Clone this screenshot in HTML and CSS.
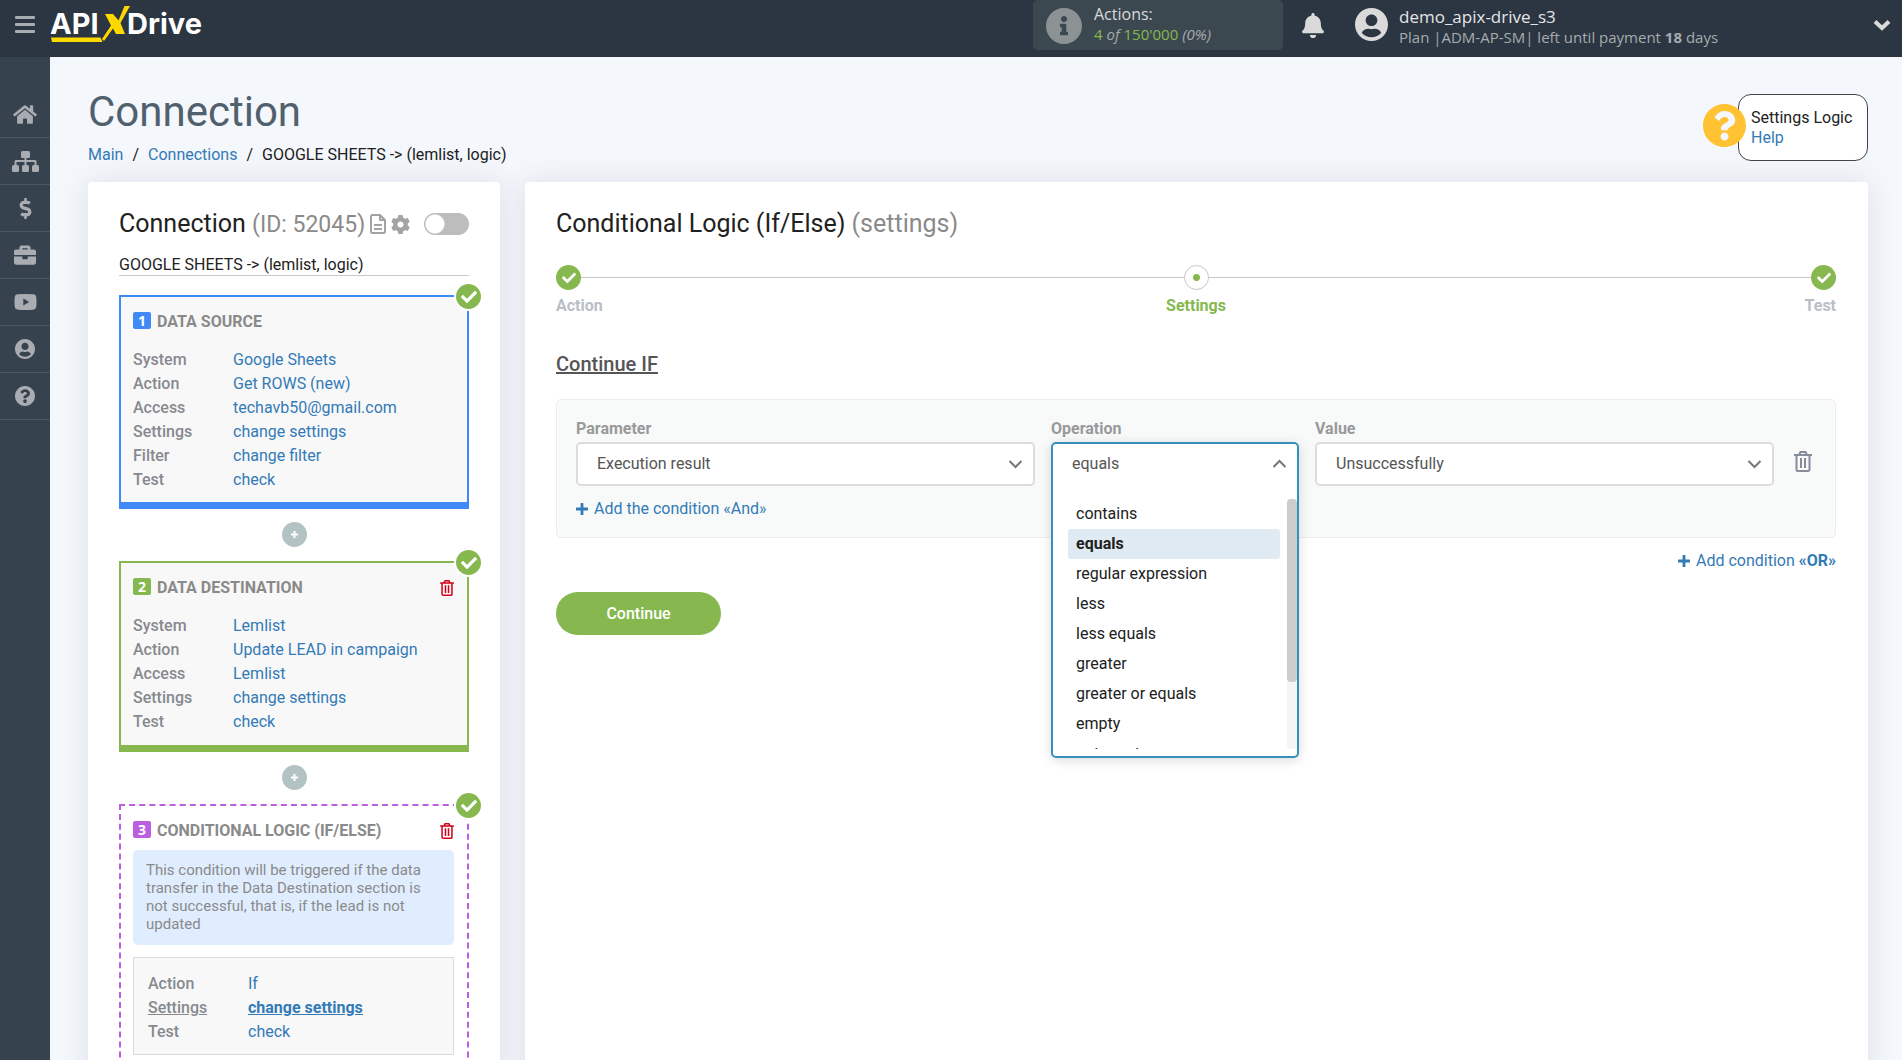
FILE: index.html
```html
<!DOCTYPE html>
<html lang="en">
<head>
<meta charset="utf-8">
<title>Connection - ApiX-Drive</title>
<meta name="viewport" content="width=device-width, initial-scale=1">
<link rel="stylesheet" href="styles.css">
</head>
<body>
<svg class="sprite" aria-hidden="true">
  <symbol id="i-check" viewBox="0 0 512 512"><path d="M173.898 439.404l-166.4-166.4c-9.997-9.997-9.997-26.206 0-36.204l36.203-36.204c9.997-9.998 26.207-9.998 36.204 0L192 312.69 432.095 72.596c9.997-9.997 26.207-9.997 36.204 0l36.203 36.204c9.997 9.997 9.997 26.206 0 36.204l-294.4 294.401c-9.998 9.997-26.207 9.997-36.204-.001z"/></symbol>
  <symbol id="i-question" viewBox="8 8 496 496"><path d="M504 256c0 136.997-111.043 248-248 248S8 392.997 8 256C8 119.083 119.043 8 256 8s248 111.083 248 248zM262.655 90c-54.497 0-89.255 22.957-116.549 63.758-3.536 5.286-2.353 12.415 2.715 16.258l34.699 26.31c5.205 3.947 12.621 3.008 16.665-2.122 17.864-22.658 30.113-35.797 57.303-35.797 20.429 0 45.698 13.148 45.698 32.958 0 14.976-12.363 22.667-32.534 33.976C247.128 238.528 216 254.941 216 296v4c0 6.627 5.373 12 12 12h56c6.627 0 12-5.373 12-12v-1.333c0-28.462 83.186-29.647 83.186-106.667 0-58.002-60.165-102-116.531-102zM256 338c-25.365 0-46 20.635-46 46 0 25.364 20.635 46 46 46s46-20.636 46-46c0-25.365-20.635-46-46-46z"/></symbol>
  <symbol id="i-info" viewBox="8 8 496 496"><path d="M256 8C119.043 8 8 119.083 8 256c0 136.997 111.043 248 248 248s248-111.003 248-248C504 119.083 392.957 8 256 8zm0 110c23.196 0 42 18.804 42 42s-18.804 42-42 42-42-18.804-42-42 18.804-42 42-42zm56 254c0 6.627-5.373 12-12 12h-88c-6.627 0-12-5.373-12-12v-24c0-6.627 5.373-12 12-12h12v-64h-12c-6.627 0-12-5.373-12-12v-24c0-6.627 5.373-12 12-12h64c6.627 0 12 5.373 12 12v100h12c6.627 0 12 5.373 12 12v24z"/></symbol>
  <symbol id="i-user" viewBox="0 8 496 496"><path d="M248 8C111 8 0 119 0 256s111 248 248 248 248-111 248-248S385 8 248 8zm0 96c48.6 0 88 39.4 88 88s-39.4 88-88 88-88-39.4-88-88 39.4-88 88-88zm0 344c-58.7 0-111.3-26.6-146.5-68.2 18.8-35.4 55.6-59.8 98.5-59.8 2.4 0 4.8.4 7.1 1.1 13 4.2 26.6 6.9 40.9 6.9 14.3 0 28-2.7 40.9-6.9 2.3-.7 4.7-1.1 7.1-1.1 42.9 0 79.7 24.4 98.5 59.8C359.3 421.4 306.7 448 248 448z"/></symbol>
  <symbol id="i-bell" viewBox="0 0 448 512"><path d="M224 512c35.32 0 63.97-28.65 63.97-64H160.03c0 35.35 28.65 64 63.97 64zm215.39-149.71c-19.32-20.76-55.47-51.99-55.47-154.29 0-77.7-54.48-139.9-127.94-155.16V32c0-17.67-14.32-32-31.98-32s-31.98 14.33-31.98 32v20.84C118.56 68.1 64.08 130.3 64.08 208c0 102.3-36.15 133.53-55.47 154.29-6 6.45-8.66 14.16-8.61 21.71.11 16.4 12.98 32 32.1 32h383.8c19.12 0 32-15.6 32.1-32 .05-7.55-2.61-15.27-8.61-21.71z"/></symbol>
  <symbol id="i-home" viewBox="0 0 576 512"><path d="M280.37 148.26L96 300.11V464a16 16 0 0 0 16 16l112.06-.29a16 16 0 0 0 15.92-16V368a16 16 0 0 1 16-16h64a16 16 0 0 1 16 16v95.64a16 16 0 0 0 16 16.05L464 480a16 16 0 0 0 16-16V300L295.67 148.26a12.19 12.19 0 0 0-15.3 0zM571.6 251.47L488 182.56V44.05a12 12 0 0 0-12-12h-56a12 12 0 0 0-12 12v72.61L318.47 43a48 48 0 0 0-61 0L4.34 251.47a12 12 0 0 0-1.6 16.9l25.5 31A12 12 0 0 0 45.15 301l235.22-193.74a12.19 12.19 0 0 1 15.3 0L530.9 301a12 12 0 0 0 16.9-1.6l25.5-31a12 12 0 0 0-1.7-16.93z"/></symbol>
  <symbol id="i-sitemap" viewBox="0 0 27 21"><rect x="9" y="0" width="9" height="7" rx="1.5"/><path d="M12.5 6h2v3H23a1.500 1.500 0 0 1 1.500 1.500V14h-2v-3h-8v3h-2v-3h-8v3h-2v-3.500A1.500 1.500 0 0 1 4 9h8.500z"/><rect x="0" y="14" width="7" height="7" rx="1.500"/><rect x="10" y="14" width="7" height="7" rx="1.500"/><rect x="20" y="14" width="7" height="7" rx="1.500"/></symbol>
  <symbol id="i-dollar" viewBox="0 0 288 512"><path d="M209.2 233.4l-108-31.6C88.700 198.2 80 186.5 80 173.5c0-16.3 13.2-29.5 29.5-29.5h66.3c12.200 0 24.200 3.700 34.200 10.500 6.100 4.100 14.300 3.100 19.500-2l34.800-34c7.100-6.900 6.100-18.400-1.800-24.500C238 74.8 207.400 64.100 176 64V16c0-8.800-7.200-16-16-16h-32c-8.800 0-16 7.200-16 16v48h-2.500C45.800 64-5.400 118.700.5 183.600c4.200 46.100 39.400 83.600 83.800 96.600l102.500 30c12.500 3.700 21.200 15.300 21.200 28.300 0 16.300-13.200 29.500-29.500 29.500h-66.300C100 368 88 364.300 78 357.500c-6.100-4.100-14.300-3.100-19.500 2l-34.800 34c-7.100 6.900-6.100 18.400 1.800 24.500 24.500 19.200 55.100 29.900 86.500 30v48c0 8.800 7.200 16 16 16h32c8.800 0 16-7.200 16-16v-48.200c46.600-.9 90.300-28.600 105.700-72.700 21.500-61.600-14.600-124.800-72.500-141.700z"/></symbol>
  <symbol id="i-case" viewBox="0 0 512 512"><path d="M320 336c0 8.840-7.160 16-16 16h-96c-8.840 0-16-7.160-16-16v-48H0v144c0 25.600 22.400 48 48 48h416c25.600 0 48-22.400 48-48V288H320v48zm144-208h-80V80c0-25.600-22.400-48-48-48H176c-25.600 0-48 22.400-48 48v48H48c-25.600 0-48 22.400-48 48v80h512v-80c0-25.600-22.400-48-48-48zm-144 0H192V96h128v32z"/></symbol>
  <symbol id="i-video" viewBox="0 0 22 16"><path fill-rule="evenodd" d="M3.500.3Q11-.3 18.500.3 21.500.4 21.800 3.400q.4 4.600 0 9.200-.3 3-3.300 3.100-7.500.6-15 0Q.5 15.600.2 12.600-.2 8 .2 3.400.5.400 3.500.3zM8.800 4.600v6.800L14.700 8z"/></symbol>
  <symbol id="i-cog" viewBox="12 8 488 496"><path d="M487.400 315.700l-42.600-24.600c4.300-23.200 4.300-47 0-70.200l42.600-24.600c4.900-2.800 7.100-8.600 5.500-14-11.100-35.600-30-67.800-54.700-94.600-3.800-4.100-10-5.100-14.800-2.300L380.800 110c-17.900-15.400-38.500-27.300-60.800-35.100V25.800c0-5.600-3.900-10.500-9.400-11.700-36.700-8.200-74.300-7.800-109.200 0-5.500 1.200-9.400 6.100-9.400 11.700V75c-22.200 7.900-42.800 19.800-60.800 35.100L88.700 85.500c-4.900-2.800-11-1.900-14.800 2.300-24.700 26.700-43.600 58.900-54.700 94.600-1.700 5.400.6 11.200 5.500 14L67.300 221c-4.300 23.200-4.300 47 0 70.200l-42.600 24.600c-4.900 2.800-7.100 8.600-5.500 14 11.100 35.600 30 67.800 54.700 94.600 3.800 4.100 10 5.100 14.800 2.300l42.600-24.600c17.900 15.400 38.500 27.300 60.800 35.100v49.200c0 5.600 3.900 10.500 9.400 11.700 36.700 8.200 74.300 7.800 109.200 0 5.500-1.200 9.400-6.100 9.400-11.700v-49.200c22.200-7.900 42.800-19.800 60.800-35.100l42.600 24.600c4.900 2.800 11 1.900 14.800-2.300 24.700-26.700 43.600-58.900 54.700-94.600 1.500-5.500-.7-11.300-5.600-14.100zM256 336c-44.100 0-80-35.900-80-80s35.900-80 80-80 80 35.900 80 80-35.900 80-80 80z"/></symbol>
  <symbol id="i-file" viewBox="0 0 16 20"><path fill="none" stroke="currentColor" stroke-width="2" stroke-linejoin="round" d="M2.500 1H10l5 5v11.500a1.500 1.500 0 0 1-1.500 1.500h-11A1.500 1.500 0 0 1 1 17.500v-15A1.500 1.500 0 0 1 2.500 1zM10 1v5h5"/><path fill="none" stroke="currentColor" stroke-width="2" d="M4 11h8M4 15h8"/></symbol>
  <symbol id="i-trash" viewBox="0 0 18 21"><path fill="none" stroke="currentColor" stroke-width="2" d="M0 4h18M5 4l1.500-3h5L13 4M2.500 4v14.500A1.500 1.500 0 0 0 4 20h10a1.500 1.500 0 0 0 1.500-1.500V4"/><path fill="none" stroke="currentColor" stroke-width="2" d="M7 7v10M11 7v10"/></symbol>
  <symbol id="i-plus" viewBox="0 0 12 12"><path d="M4.600.5a.5.500 0 0 1 .5-.5h1.800a.5.500 0 0 1 .5.500v4.100h4.100a.5.500 0 0 1 .5.500v1.800a.5.500 0 0 1-.5.500H7.400v4.100a.5.500 0 0 1-.5.500H5.100a.5.500 0 0 1-.5-.5V7.400H.5a.5.500 0 0 1-.5-.5V5.100a.5.500 0 0 1 .5-.5h4.100z"/></symbol>
  <symbol id="i-down" viewBox="0 0 14 9"><path fill="none" stroke="currentColor" stroke-width="2" d="M1 1l6 6 6-6"/></symbol>
  <symbol id="i-up" viewBox="0 0 14 9"><path fill="none" stroke="currentColor" stroke-width="2" d="M1 8l6-6 6 6"/></symbol>
</svg>

<header class="topbar">
  <button class="menu-btn" type="button" aria-label="Menu"><span></span><span></span><span></span></button>
  <a class="logo" href="#" aria-label="ApiX-Drive">
    <svg width="156" height="40" viewBox="0 0 156 40">
      <text class="logo-text" x="0" y="31">API</text>
      <text class="logo-text" x="77" y="31">Drive</text>
      <path class="logo-mark" d="M55 11h8l5.500 6.500L74.500 3H80L70.500 20 75 31h-9l-3-5.500L54 38l-2-2 9-13.500zM1 34.500h49.500l2 4.500H2z"/>
    </svg>
  </a>
  <div class="quota">
    <svg class="quota-icon"><use href="#i-info"/></svg>
    <div class="quota-text">Actions:<br><small><span class="green">4</span> <i>of</i> <span class="green">150'000</span> <i>(0%)</i></small></div>
  </div>
  <button class="plain bell" type="button" aria-label="Notifications"><svg><use href="#i-bell"/></svg></button>
  <svg class="avatar"><use href="#i-user"/></svg>
  <div class="account">
    <div class="account-name">demo_apix-drive_s3</div>
    <div class="account-plan">Plan |ADM-AP-SM| left until payment <b>18</b> days</div>
  </div>
  <button class="plain account-toggle" type="button" aria-label="Account menu"><svg viewBox="0 0 18 12"><path d="M2 2.500l7 6.500 7-6.500"/></svg></button>
</header>

<div class="app">
  <nav class="sidebar" aria-label="Sections">
    <a href="#" aria-label="Home"><svg width="24" height="21"><use href="#i-home"/></svg></a>
    <a href="#" aria-label="Connections"><svg width="27" height="21"><use href="#i-sitemap"/></svg></a>
    <a href="#" aria-label="Billing"><svg width="13" height="21"><use href="#i-dollar"/></svg></a>
    <a href="#" aria-label="Services"><svg width="22" height="22"><use href="#i-case"/></svg></a>
    <a href="#" aria-label="Video"><svg width="23" height="16"><use href="#i-video"/></svg></a>
    <a href="#" aria-label="Profile"><svg width="20" height="20"><use href="#i-user"/></svg></a>
    <a href="#" aria-label="Help"><svg width="20" height="20"><use href="#i-question"/></svg></a>
  </nav>

  <main class="content">
    <div class="page-head">
      <div>
        <h1>Connection</h1>
        <div class="crumbs"><a href="#">Main</a><span>/</span><a href="#">Connections</a><span>/</span>GOOGLE SHEETS -&gt; (lemlist, logic)</div>
      </div>
      <aside class="help">
        <svg class="help-icon"><use href="#i-question"/></svg>
        <div>Settings Logic</div>
        <a href="#">Help</a>
      </aside>
    </div>

    <div class="columns">
      <section class="card">
        <div class="conn-head">
          <h2>Connection <span>(ID: 52045)</span></h2>
          <svg width="16" height="20"><use href="#i-file"/></svg>
          <svg width="19" height="19"><use href="#i-cog"/></svg>
          <input class="switch" type="checkbox" aria-label="Connection enabled">
        </div>
        <input class="conn-name" type="text" value="GOOGLE SHEETS -&gt; (lemlist, logic)" aria-label="Connection name">

        <div class="block block-blue">
          <span class="done"><svg><use href="#i-check"/></svg></span>
          <h3><span class="num">1</span>DATA SOURCE</h3>
          <dl>
            <dt>System</dt><dd><a href="#">Google Sheets</a></dd>
            <dt>Action</dt><dd><a href="#">Get ROWS (new)</a></dd>
            <dt>Access</dt><dd><a href="#">techavb50@gmail.com</a></dd>
            <dt>Settings</dt><dd><a href="#">change settings</a></dd>
            <dt>Filter</dt><dd><a href="#">change filter</a></dd>
            <dt>Test</dt><dd><a href="#">check</a></dd>
          </dl>
        </div>
        <button class="add" type="button" aria-label="Add block"><svg viewBox="0 0 25 25"><path d="M12.500 9v7M9 12.500h7"/></svg></button>

        <div class="block block-green">
          <span class="done"><svg><use href="#i-check"/></svg></span>
          <h3><span class="num">2</span>DATA DESTINATION<button class="plain remove" type="button" aria-label="Delete"><svg><use href="#i-trash"/></svg></button></h3>
          <dl>
            <dt>System</dt><dd><a href="#">Lemlist</a></dd>
            <dt>Action</dt><dd><a href="#">Update LEAD in campaign</a></dd>
            <dt>Access</dt><dd><a href="#">Lemlist</a></dd>
            <dt>Settings</dt><dd><a href="#">change settings</a></dd>
            <dt>Test</dt><dd><a href="#">check</a></dd>
          </dl>
        </div>
        <button class="add" type="button" aria-label="Add block"><svg viewBox="0 0 25 25"><path d="M12.500 9v7M9 12.500h7"/></svg></button>

        <div class="block block-logic">
          <span class="done"><svg><use href="#i-check"/></svg></span>
          <h3><span class="num">3</span>CONDITIONAL LOGIC (IF/ELSE)<button class="plain remove" type="button" aria-label="Delete"><svg><use href="#i-trash"/></svg></button></h3>
          <p class="note">This condition will be triggered if the data transfer in the Data Destination section is not successful, that is, if the lead is not updated</p>
          <dl class="inner">
            <dt>Action</dt><dd><a href="#">If</a></dd>
            <dt class="current">Settings</dt><dd class="current"><a href="#">change settings</a></dd>
            <dt>Test</dt><dd><a href="#">check</a></dd>
          </dl>
        </div>
      </section>

      <section class="card card-settings">
        <h2>Conditional Logic (If/Else) <span>(settings)</span></h2>
        <ol class="steps">
          <li><span class="dot"><svg><use href="#i-check"/></svg></span>Action</li>
          <li class="active"><span class="dot"></span>Settings</li>
          <li><span class="dot"><svg><use href="#i-check"/></svg></span>Test</li>
        </ol>
        <h3 class="if-title">Continue IF</h3>

        <div class="condition">
          <div class="fields">
            <div class="field">
              <label for="param">Parameter</label>
              <div class="select">
                <select id="param"><option>Execution result</option></select>
                <svg><use href="#i-down"/></svg>
              </div>
            </div>
            <div class="field">
              <label for="op">Operation</label>
              <div class="dropdown">
                <div class="panel">
                  <div class="select open">
                    <select id="op"><option>equals</option></select>
                    <svg><use href="#i-up"/></svg>
                  </div>
                  <div class="list-wrap">
                    <ul class="list" role="listbox" aria-label="Operation">
                      <li role="option">contains</li>
                      <li role="option" aria-selected="true">equals</li>
                      <li role="option">regular expression</li>
                      <li role="option">less</li>
                      <li role="option">less equals</li>
                      <li role="option">greater</li>
                      <li role="option">greater or equals</li>
                      <li role="option">empty</li>
                      <li role="option">not empty</li>
                    </ul>
                    <div class="track"><div class="thumb"></div></div>
                  </div>
                </div>
              </div>
            </div>
            <div class="field">
              <label for="val">Value</label>
              <div class="select">
                <select id="val"><option>Unsuccessfully</option></select>
                <svg><use href="#i-down"/></svg>
              </div>
            </div>
            <button class="plain row-remove" type="button" aria-label="Delete condition"><svg><use href="#i-trash"/></svg></button>
          </div>
          <a class="add-link" href="#"><svg><use href="#i-plus"/></svg>Add the condition «And»</a>
        </div>
        <div class="or-row"><a class="add-link" href="#"><svg><use href="#i-plus"/></svg><span>Add condition <b>«OR»</b></span></a></div>
        <button class="continue" type="button">Continue</button>
      </section>
    </div>
  </main>
</div>
</body>
</html>
```
FILE: styles.css
```css
* { box-sizing: border-box; }

body {
  margin: 0;
  height: 100vh;
  display: flex;
  flex-direction: column;
  overflow: hidden;
  background: #f4f7fc;
  color: #212121;
  font: 16px/20px Roboto, "Liberation Sans", sans-serif;
}

h1, h2, h3, p, ol, ul, dl, dd { margin: 0; padding: 0; }
ol, ul { list-style: none; }
a { color: #337ab7; text-decoration: none; }
b { font-weight: 700; }
svg { display: block; flex: none; fill: currentColor; }
button, input, select { font: inherit; }
button { cursor: pointer; }
.plain { padding: 0; border: 0; background: none; }
.sprite { position: absolute; width: 0; height: 0; }

/* Top bar */
.topbar {
  flex: none;
  display: flex;
  align-items: flex-start;
  height: 57px;
  padding: 0 11px 0 15px;
  background: #2b3642;
  font-family: "Open Sans", "Noto Sans", sans-serif;
}
.menu-btn {
  display: flex;
  flex-direction: column;
  gap: 4px;
  width: 20px;
  margin: 16px 15px 0 0;
  padding: 0;
  border: 0;
  background: none;
}
.menu-btn span { height: 3px; border-radius: 1px; background: #a8adb2; }
.logo { margin: 3px auto 0 0; }
.logo-text { fill: #fff; font: 700 29px Inter, sans-serif; }
.logo-mark { fill: #ffd800; }
.quota {
  display: flex;
  gap: 12px;
  width: 250px;
  height: 50px;
  padding: 8px 13px;
  border-radius: 5px;
  background: #3c4850;
}
.quota-icon { width: 36px; height: 36px; color: #8c9194; }
.quota-text { margin-top: -4px; color: #d9dadb; }
.quota small { font-size: 15px; color: #a6abae; }
.green { color: #86b84f; }
.bell { margin: 13px 31px 0 19px; color: #dadada; }
.bell svg { width: 22px; height: 25px; }
.avatar { width: 33px; height: 33px; margin: 8px 11px 0 0; color: #dadada; }
.account { width: 474px; margin-top: 7px; }
.account-name { color: #e4e5e6; font-size: 17px; }
.account-plan { color: #a6abae; font-size: 15px; }
.account-toggle { margin-top: 19px; }
.account-toggle svg { width: 18px; height: 12px; fill: none; stroke: #dadada; stroke-width: 4px; }

/* Side navigation */
.app { flex: 1; display: flex; min-height: 0; }
.sidebar { flex: none; width: 50px; padding-top: 34px; background: #37424f; color: #a9adb1; }
.sidebar a {
  display: flex;
  align-items: center;
  justify-content: center;
  height: 47px;
  border-bottom: 1px solid #4d5762;
  color: inherit;
}

/* Page */
.content { flex: 1; min-width: 0; padding: 28px 34px 0 38px; overflow: hidden; }
.page-head { display: flex; justify-content: space-between; align-items: flex-start; }
h1 { color: #50606d; font-size: 42px; line-height: 54px; font-weight: 400; }
.crumbs { display: flex; gap: 9px; margin: 4px 0 15px; line-height: 24px; }
.help {
  position: relative;
  width: 130px;
  height: 67px;
  margin-top: 9px;
  padding: 13px 12px;
  border: 1px solid #444;
  border-radius: 13px;
  background: #fff;
}
.help-icon { position: absolute; left: -36px; top: 9px; width: 43px; height: 43px; color: #ffc233; }

.columns { display: grid; grid-template-columns: 412px 1fr; gap: 25px; min-height: 100%; }
.card {
  padding: 27px 31px 40px;
  border-radius: 4px;
  background: #fff;
  box-shadow: 0 0 30px rgba(60, 70, 90, .12);
}
.card-settings { padding-right: 32px; }
h2 { font-size: 25px; line-height: 30px; font-weight: 400; }
h2 span { color: #8a8a8a; }

/* Connection column */
.conn-head { display: flex; align-items: center; gap: 5px; height: 30px; color: #a3a3a3; }
.conn-head h2 { color: #212121; white-space: nowrap; }
.conn-head h2 span { font-size: 23px; }
.switch {
  appearance: none;
  width: 45px;
  height: 22px;
  margin: 0 0 0 auto;
  border-radius: 11px;
  background: radial-gradient(circle at 11px 11px, #fff 9px, #bdbdbd 10px);
}
.conn-name {
  display: block;
  width: 100%;
  height: 24px;
  margin: 13px 0 19px;
  padding: 2px 0 0;
  border: 0;
  border-bottom: 1px solid #c8c8c8;
  background: none;
  color: #212121;
}
.block {
  position: relative;
  padding: 15px 13px 10px 12px;
  border: 2px solid;
  border-bottom-width: 7px;
  background: #f8f8f8;
}
.block-blue { border-color: #3f8af7; --accent: #3f8af7; }
.block-green { border-color: #86b84f; --accent: #86b84f; padding-bottom: 11px; }
.block-logic { border: 2px dashed #bb5edf; padding-bottom: 40px; background: #fff; --accent: #bb5edf; }
.block h3 {
  display: flex;
  align-items: flex-start;
  gap: 6px;
  color: #8a8a8a;
  font-size: 16px;
  font-weight: 700;
}
.num {
  width: 18px;
  border-radius: 2px;
  background: var(--accent);
  color: #fff;
  font: 700 14px/17px "Open Sans", sans-serif;
  text-align: center;
}
.remove { margin: 2px 0 0 auto; color: #d0021b; }
.remove svg { width: 14px; height: 16px; }
.done {
  position: absolute;
  top: -15px;
  right: -16px;
  display: grid;
  place-items: center;
  width: 29px;
  height: 29px;
  border: 2px solid #fff;
  border-radius: 50%;
  background: #86b84f;
  color: #fff;
}
.done svg { width: 16px; height: 16px; }
dl {
  display: grid;
  grid-template-columns: 100px 1fr;
  margin-top: 16px;
  line-height: 24px;
}
dt { color: #87898f; font-weight: 500; }
.current { font-weight: 700; text-decoration: underline; }
dt.current { font-weight: 500; }
.current a { text-decoration: underline; }
.add {
  display: block;
  width: 25px;
  height: 25px;
  margin: 13px auto 14px;
  padding: 0;
  border: 0;
  border-radius: 50%;
  background: #b3c3c3;
}
.add path { stroke: #fff; stroke-width: 2px; }
.note {
  margin-top: 9px;
  padding: 11px 13px 12px;
  border-radius: 5px;
  background: #e0edff;
  color: #8a8a8a;
  font-size: 15px;
  line-height: 18px;
}
.inner { margin-top: 12px; padding: 14px 14px 10px; border: 1px solid #dcdcdc; background: #f8f8f8; }

/* Settings column */
.steps { position: relative; display: flex; margin-top: 26px; color: #b9bec7; font-weight: 700; }
.steps::before { content: ""; position: absolute; left: 0; right: 0; top: 12px; height: 1px; background: #c8c8c8; }
.steps li { position: relative; flex: 1; display: flex; flex-direction: column; gap: 6px; align-items: flex-start; }
.steps li:nth-child(2) { align-items: center; }
.steps li:last-child { align-items: flex-end; }
.steps .active { color: #86b84f; }
.dot {
  display: grid;
  place-items: center;
  width: 25px;
  height: 25px;
  border-radius: 50%;
  background: #86b84f;
  color: #fff;
}
.dot svg { width: 14px; height: 14px; }
.active .dot { border: 1px solid #c8c8c8; background: radial-gradient(circle, #86b84f 3px, #fff 4px); }
.if-title {
  margin: 36px 0 23px;
  color: #555;
  font-size: 20px;
  line-height: 24px;
  font-weight: 500;
  text-decoration: underline;
}
.condition { padding: 19px 19px 18px; border: 1px solid #ebedec; border-radius: 5px; background: #f8faf9; }
.fields { display: grid; grid-template-columns: 1fr 248px 1fr 26px; gap: 16px; margin-bottom: 13px; }
.field label { display: block; margin-bottom: 3px; color: #999; font-weight: 700; }
.select { position: relative; }
.select select {
  appearance: none;
  display: block;
  width: 100%;
  height: 44px;
  padding: 0 40px 0 19px;
  border: 2px solid #dcdcdc;
  border-radius: 5px;
  background: #fff;
  color: #555;
}
.select svg { position: absolute; right: 12px; top: 18px; width: 15px; height: 9px; color: #777; pointer-events: none; }
.select.open select { height: 40px; border: 0; }
.select.open svg { right: 10px; top: 15px; }
.dropdown { position: relative; height: 44px; }
.panel {
  position: absolute;
  z-index: 2;
  inset: 0 0 auto;
  padding-bottom: 7px;
  border: 2px solid #3690b9;
  border-radius: 5px;
  background: #fff;
  box-shadow: 0 2px 12px rgba(0, 0, 0, .15);
}
.list-wrap { display: flex; gap: 7px; height: 250px; margin-top: 15px; padding-left: 15px; overflow: hidden; }
.list { flex: 1; }
.list li { height: 30px; padding: 0 8px; border-radius: 3px; line-height: 30px; }
.list [aria-selected="true"] { background: #e0eaf3; font-weight: 700; }
.track { width: 10px; border-radius: 4px; background: #f5f5f5; }
.thumb { height: 73%; border-radius: 4px; background: #ccc; }
.row-remove { align-self: start; margin: 32px auto 0; color: #868c99; }
.row-remove svg { width: 18px; height: 21px; }
.add-link { display: flex; align-items: center; gap: 6px; width: fit-content; }
.add-link svg { width: 12px; height: 12px; }
.or-row { display: flex; justify-content: flex-end; margin: 13px 0 21px; }
.continue {
  width: 165px;
  height: 43px;
  border: 0;
  border-radius: 22px;
  background: #86b84f;
  color: #fff;
  font-weight: 500;
}
```
